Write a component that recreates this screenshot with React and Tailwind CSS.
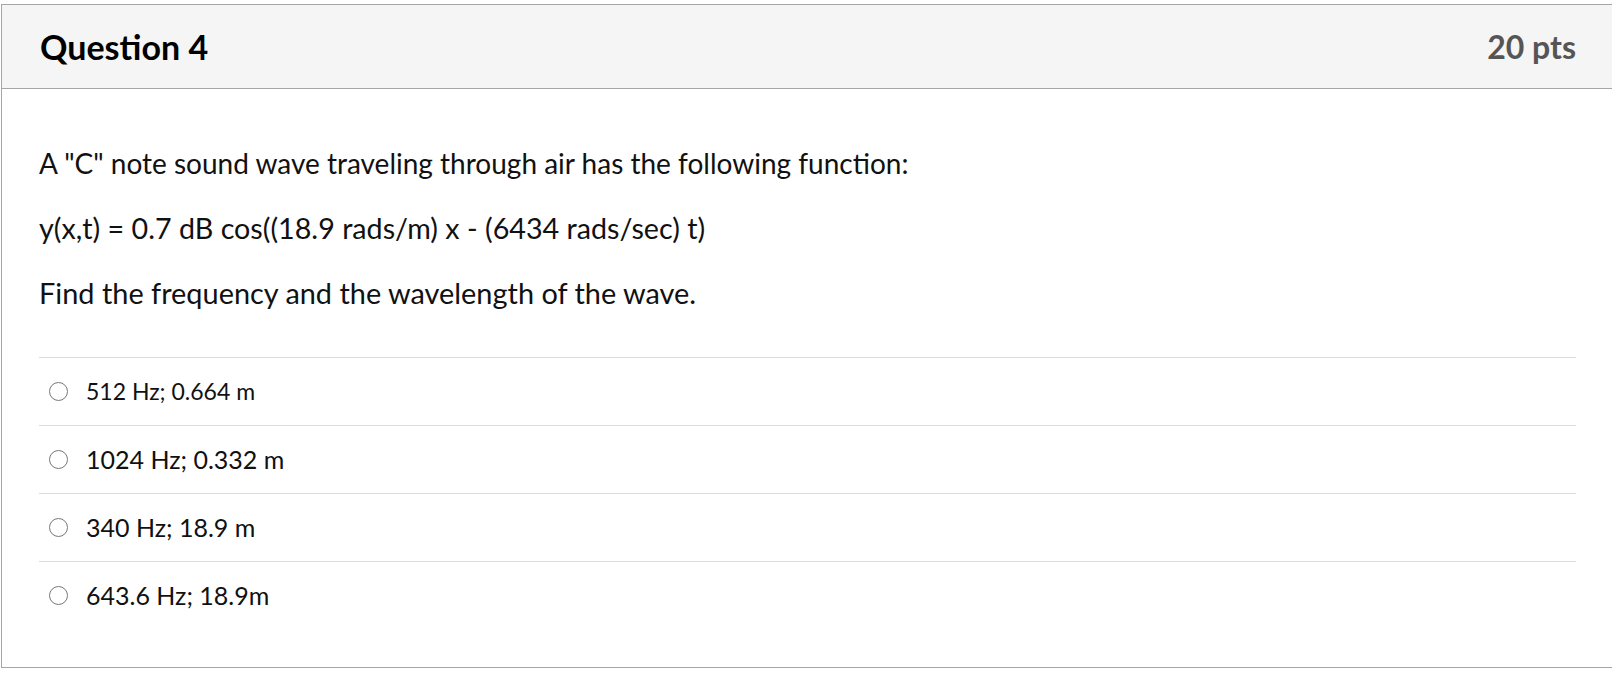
import React from "react";

const options = [
  { t: "512 Hz; 0.664 m", s: "text-[23px]" },
  { t: "1024 Hz; 0.332 m", s: "text-[25px]" },
  { t: "340 Hz; 18.9 m", s: "text-[25px]" },
  { t: "643.6 Hz; 18.9m", s: "text-[25px]" },
];

export default function App() {
  return (
    <div className="w-[1612px] h-[674px] overflow-hidden bg-white pt-[4px] pl-[1px]" style={{ fontFamily: "Lato, 'Liberation Sans', sans-serif" }}>
      <div className="border-l border-t border-b border-[#a6a6a6] h-[664px] flex flex-col">
        <div className="h-[84px] bg-[#f5f5f5] border-b border-[#a6a6a6] flex items-center justify-between pl-[38px] pr-[36px]">
          <h2 className="text-[34px] font-bold text-black leading-none">Question 4</h2>
          <div className="text-[32px] font-bold text-[#555555] leading-none">20 pts</div>
        </div>
        <div className="pl-[37px] pr-[36px] pt-[55px]">
          <p className="text-[28px] text-[#111] leading-[38px]">A "C" note sound wave traveling through air has the following function:</p>
          <p className="text-[28.7px] text-[#111] leading-[38px] mt-[27px]">y(x,t) = 0.7 dB cos((18.9 rads/m) x - (6434 rads/sec) t)</p>
          <p className="text-[28.9px] text-[#111] leading-[38px] mt-[27px]">Find the frequency and the wavelength of the wave.</p>
          <div className="mt-[45px]">
            {options.map((o) => (
              <div key={o.t} className="border-t border-[#dcdcdc] h-[68px] flex items-center pl-[10px]">
                <span className="w-[19px] h-[19px] rounded-full border-[1.5px] border-[#777777] bg-white shrink-0" />
                <span className={`ml-[18px] ${o.s} text-[#111] leading-none`}>{o.t}</span>
              </div>
            ))}
          </div>
        </div>
      </div>
    </div>
  );
}
